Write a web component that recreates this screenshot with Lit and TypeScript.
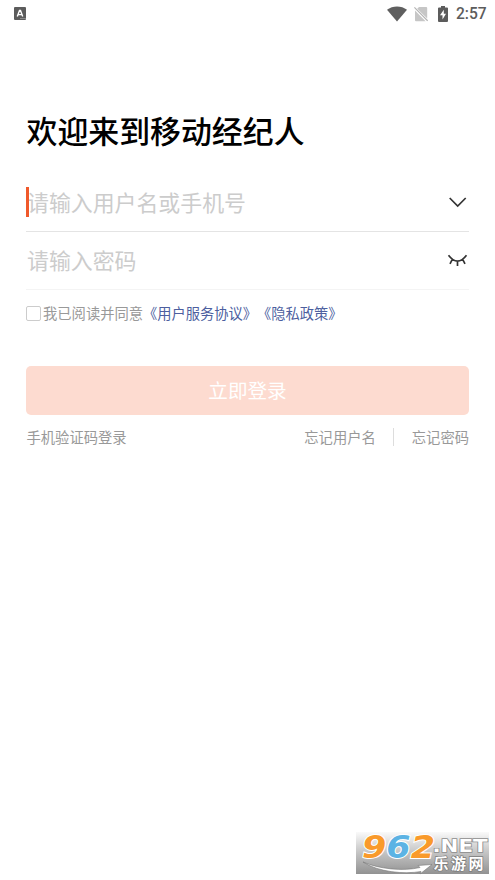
import { LitElement, html, css } from "lit";
import { customElement } from "lit/decorators.js";

@customElement("status-bar")
class StatusBar extends LitElement {
  static styles = css`
    :host { display: flex; align-items: center; height: 27px; padding: 0 9px 0 14px; box-sizing: border-box; }
    .spacer { flex: 1; }
    svg { display: block; flex: none; }
    .wifi { margin-right: 7px; }
    .sim { margin-right: 10px; }
    .battery { margin-right: 8px; }
    .time { font: 500 15.6px/25px Roboto, sans-serif; color: #5c5c5c; width: 30px; white-space: nowrap; padding-top: 2px; }
  `;
  render() {
    return html`
      <svg width="12" height="13" viewBox="0 0 12 13">
        <rect width="12" height="13" rx="1" fill="#5c5c5c" />
        <path d="M3.3 9.5 5.5 3.4h1L8.7 9.5M4.4 7.6h3.4" fill="none" stroke="#fff" stroke-width="1.4" />
        <path d="M6.5 11.5h1m1 0h1m1 0h1" stroke="#bbb" />
      </svg>
      <div class="spacer"></div>
      <svg class="wifi" width="20" height="16" viewBox="0 0 20 16">
        <path d="M0 3.8C5.5-.7 14.5-.7 20 3.8L10 15.6Z" fill="#5f5f5f" />
      </svg>
      <svg class="sim" width="14" height="16" viewBox="0 0 14 16">
        <path d="M5 1h7.2q1 0 1 1v10.6L3.2 2.7ZM1 4.6 11.6 15.2H2q-1 0-1-1Z" fill="#c6c6c6" />
        <path d="M.4 1.3 13.6 14.8" stroke="#b4b4b4" stroke-width="1.2" />
      </svg>
      <svg class="battery" width="10" height="16" viewBox="0 0 10 16">
        <path d="M3 0h4v1.6h2q1 0 1 1V15q0 1-1 1H1q-1 0-1-1V2.6q0-1 1-1h2Z" fill="#5c5c5c" />
        <path d="M5.8 3.7 2 9.3h2.5v4.1L8 7.8H5.8Z" fill="#fff" />
      </svg>
      <span class="time">2:57</span>
    `;
  }
}

@customElement("site-mark")
class SiteMark extends LitElement {
  static styles = css`
    :host { display: block; width: 133px; height: 42px; background: linear-gradient(#fafafa, #c8c8c8 45%, #929292); }
    svg { display: block; overflow: visible; }
    .digits { font: italic 700 32px "DejaVu Sans", sans-serif; stroke: #fff; stroke-width: 2px; paint-order: stroke; }
    .orange { fill: #f99a2b; }
    .blue { fill: #5cb3e4; }
    .net { font: 700 17px "DejaVu Sans", sans-serif; fill: #fff; stroke: #8d8d8d; stroke-width: 1.4px; paint-order: stroke; }
    .name { font: 700 15px "Noto Sans CJK SC", sans-serif; fill: #fff; stroke: #7c7c7c; stroke-width: 1.4px; paint-order: stroke; }
  `;
  render() {
    return html`
      <svg width="133" height="42" viewBox="0 0 133 42">
        <path d="M7 30C23 37 47 39.500 64 35.500l-2-2 14-1-12 9.500 1-2.500C48 42.500 22 40 7 30Z" fill="#fff" stroke="#777" stroke-width=".6" />
        <text class="digits" x="6" y="25.500" textLength="73" lengthAdjust="spacingAndGlyphs"><tspan class="orange">9</tspan><tspan class="blue">6</tspan><tspan class="orange">2</tspan></text>
        <text class="net" x="76.500" y="20" textLength="55" lengthAdjust="spacingAndGlyphs">.NET</text>
        <text class="name" x="77.500" y="37" textLength="50">乐游网</text>
      </svg>
    `;
  }
}

@customElement("app-root")
class AppRoot extends LitElement {
  static styles = css`
    :host {
      display: block; position: relative; height: 880px; overflow: hidden; background: #fff;
      font-family: "Noto Sans CJK SC", sans-serif; text-spacing-trim: space-all;
    }
    .login { display: flex; flex-direction: column; padding: 80px 26px 0; }
    .title { margin: 0; padding-left: 0.5px; font-size: 30.9px; line-height: 46px; font-weight: 500; color: #000; }
    .field { display: flex; align-items: center; justify-content: space-between; width: 443px; box-sizing: border-box; font-size: 21.9px; color: #ccc; }
    .user { height: 58px; margin-top: 21px; border-bottom: 1px solid #e4e4e4; }
    .pass { height: 58px; border-bottom: 1px solid #f4f4f4; }
    .hint { position: relative; line-height: 30px; padding: 0 0 1px 1px; }
    .caret { position: absolute; left: 0; top: 0; width: 2.5px; height: 30px; background: #f0592b; }
    svg { display: block; }
    .agree { display: flex; align-items: center; height: 20px; margin-top: 13px; font-size: 14.3px; line-height: 20px; color: #999; white-space: nowrap; }
    .box { width: 15px; height: 15px; box-sizing: border-box; border: 1px solid #ccc; border-radius: 2px; margin-right: 2px; }
    .link { color: #4d5f9f; font-size: 14.25px; }
    .submit { display: block; width: 443px; height: 49px; margin-top: 43px; padding: 0 0 1px; border: 0; border-radius: 5px; background: #fddbd0; color: #fff; font: 19.6px/48px "Noto Sans CJK SC", sans-serif; }
    .more { display: flex; align-items: center; width: 442.5px; height: 20px; margin-top: 12px; padding-left: 0.5px; font-size: 14.3px; line-height: 20px; color: #999; }
    .phone { flex: 1; }
    .bar { width: 1px; height: 18px; background: #ddd; margin: 0 18px 0 17px; }
    .mark { position: absolute; left: 356px; top: 832px; }
  `;
  render() {
    return html`
      <status-bar></status-bar>
      <main class="login">
        <h1 class="title">欢迎来到移动经纪人</h1>
        <div class="field user">
          <span class="hint">请输入用户名或手机号<i class="caret"></i></span>
          <svg width="22" height="22" viewBox="0 0 22 22"><path d="M2.700 6 10.700 14 18.700 6" fill="none" stroke="#333" stroke-width="1.7" /></svg>
        </div>
        <div class="field pass">
          <span class="hint">请输入密码</span>
          <svg width="22" height="22" viewBox="0 0 22 22"><path d="M1.500 5.200Q10.500 17 19.500 5.200M5.300 9.400 3 13.800M10.500 11V16M15.700 9.400l2.300 4.400" fill="none" stroke="#333" stroke-width="1.700" /></svg>
        </div>
        <div class="agree">
          <span class="box"></span><span>我已阅读并同意</span><span class="link">《用户服务协议》</span><span class="link">《隐私政策》</span>
        </div>
        <button class="submit">立即登录</button>
        <div class="more">
          <span class="phone">手机验证码登录</span><span>忘记用户名</span><i class="bar"></i><span>忘记密码</span>
        </div>
      </main>
      <site-mark class="mark"></site-mark>
    `;
  }
}
